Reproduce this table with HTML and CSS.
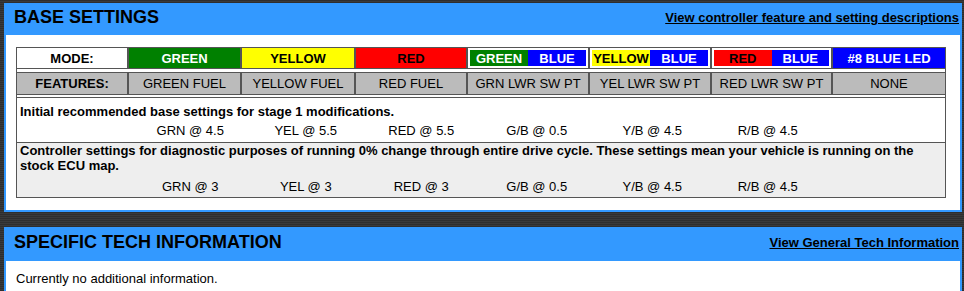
FILE: index.html
```html
<!DOCTYPE html>
<html lang="en">
  <head>
    <meta charset="UTF-8" />
    <meta name="viewport" content="width=device-width, initial-scale=1.0" />
    <title>Controller Settings</title>
    <link rel="stylesheet" href="styles.css">
  </head>
  <body>
    <div class="panel">
      <div class="panel-head">
        <h2 class="panel-title">BASE SETTINGS</h2>
        <a class="panel-link" href="#">View controller feature and setting descriptions</a>
      </div>
      <div class="panel-body">
        <div class="settings">
          <div class="cell label">MODE:</div>
          <div class="cell green">GREEN</div>
          <div class="cell yellow">YELLOW</div>
          <div class="cell red">RED</div>
          <div class="cell split"><span class="green">GREEN</span><span class="blue">BLUE</span></div>
          <div class="cell split"><span class="yellow">YELLOW</span><span class="blue">BLUE</span></div>
          <div class="cell split"><span class="red">RED</span><span class="blue">BLUE</span></div>
          <div class="cell blue">#8 BLUE LED</div>

          <div class="spacer"></div>

          <div class="cell feature label">FEATURES:</div>
          <div class="cell feature">GREEN FUEL</div>
          <div class="cell feature">YELLOW FUEL</div>
          <div class="cell feature">RED FUEL</div>
          <div class="cell feature">GRN LWR SW PT</div>
          <div class="cell feature">YEL LWR SW PT</div>
          <div class="cell feature">RED LWR SW PT</div>
          <div class="cell feature">NONE</div>

          <div class="spacer thin"></div>

          <div class="note note-stage">
            <p class="note-text">Initial recommended base settings for stage 1 modifications.</p>
            <div class="values">
              <span>GRN @ 4.5</span>
              <span>YEL @ 5.5</span>
              <span>RED @ 5.5</span>
              <span>G/B @ 0.5</span>
              <span>Y/B @ 4.5</span>
              <span>R/B @ 4.5</span>
            </div>
          </div>

          <div class="note note-stock">
            <p class="note-text">Controller settings for diagnostic purposes of running 0% change through entire drive cycle. These settings mean your vehicle is running on the<br>stock ECU map.</p>
            <div class="values">
              <span>GRN @ 3</span>
              <span>YEL @ 3</span>
              <span>RED @ 3</span>
              <span>G/B @ 0.5</span>
              <span>Y/B @ 4.5</span>
              <span>R/B @ 4.5</span>
            </div>
          </div>
        </div>
      </div>
    </div>

    <div class="panel last">
      <div class="panel-head tall">
        <h2 class="panel-title">SPECIFIC TECH INFORMATION</h2>
        <a class="panel-link" href="#">View General Tech Information</a>
      </div>
      <div class="panel-body info">
        Currently no additional information.
      </div>
    </div>
  </body>
</html>
```

FILE: styles.css
```css
body {
  margin: 0;
  padding: 3px 2px 0 4px;
  font-family: "Liberation Sans", Arial, sans-serif;
  font-size: 13px;
  color: #000;
  background: repeating-linear-gradient(
    to bottom,
    #2e2e2e 0,
    #2e2e2e 1px,
    #3a3a3a 1px,
    #3a3a3a 2px
  );
  min-height: 100vh;
  box-sizing: border-box;
  overflow: hidden;
}
.panel {
  border: 2px solid #3399ff;
  border-top: 0;
  background-color: #fff;
  margin-bottom: 15px;
}
.panel.last {
  margin-bottom: 0;
}
.panel-head {
  display: flex;
  justify-content: space-between;
  align-items: flex-start;
  height: 32px;
  padding: 4px 3px 0 10px;
  margin: 0 -2px;
  box-sizing: border-box;
  background-color: #3399ff;
}
.panel-head.tall {
  height: 34px;
  padding-top: 5px;
}
.panel-title {
  margin: 0;
  font-size: 18px;
  line-height: 21px;
  font-weight: bold;
}
.panel-link {
  margin-top: 3px;
  color: #000;
  font-weight: bold;
  line-height: 15px;
}
.panel-body {
  padding: 12px 10px;
}
.panel-body.info {
  padding: 10px 10px 6px;
  line-height: 15px;
}

/* colour mode table */
.settings {
  display: grid;
  grid-template-columns: 110px 111px 112px 110px 120px 120px 119px 112px;
  column-gap: 2px;
  row-gap: 1px;
  width: 928px;
  padding: 1px;
  background-color: #555;
}
.cell {
  display: flex;
  align-items: center;
  justify-content: center;
  height: 20px;
  background-color: #fff;
  font-weight: bold;
}
.green {
  background-color: #008000;
  color: #fff;
}
.yellow {
  background-color: #ffff00;
  color: #000;
}
.red {
  background-color: #ff0000;
  color: #000;
}
.blue {
  background-color: #0000ff;
  color: #fff;
}
.split {
  padding: 2px;
  box-sizing: border-box;
}
.split span {
  flex: 1;
  height: 100%;
  display: flex;
  align-items: center;
  justify-content: center;
}
.spacer {
  grid-column: 1 / -1;
  height: 3px;
  background-color: #fff;
}
.spacer.thin {
  height: 2px;
}
.cell.feature {
  height: 21px;
  background-color: #bbbbbb;
  font-weight: normal;
}
.cell.feature.label {
  font-weight: bold;
}
.note {
  grid-column: 1 / -1;
  line-height: 15px;
  background-color: #fff;
}
.note-stage {
  padding: 6px 0 4px;
}
.note-stock {
  padding: 0 0 3px;
  background-color: #eeeeee;
}
.note-text {
  margin: 0;
  padding-left: 3px;
  font-weight: bold;
}
.values {
  display: grid;
  grid-template-columns: repeat(8, 1fr);
  padding-right: 4px;
  margin-top: 4px;
  text-align: center;
}
.note-stock .values {
  margin-top: 6px;
}
.values span:first-child {
  grid-column-start: 2;
}
```
